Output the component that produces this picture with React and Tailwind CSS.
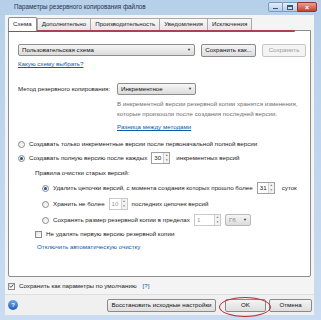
import React from 'react';

const font = { fontFamily: '"Liberation Sans", Arial, sans-serif' };

function Radio({ checked }) {
  return (
    <span className="w-[7px] h-[7px] rounded-full border border-[#8a8a8a] bg-gradient-to-br from-[#e6e6e6] to-white flex items-center justify-center shrink-0">
      {checked && <span className="w-[3px] h-[3px] rounded-full bg-[#1f4f8a]" />}
    </span>
  );
}

function Check({ checked }) {
  return (
    <span className="w-[7px] h-[7px] border border-[#8a8a8a] bg-gradient-to-br from-[#e2e2e2] to-white flex items-center justify-center shrink-0">
      {checked && (
        <svg width="6" height="6" viewBox="0 0 6 6">
          <path d="M0.8 3.1 L2.4 4.7 L5.2 1.2" stroke="#2a4d7a" strokeWidth="1.1" fill="none" />
        </svg>
      )}
    </span>
  );
}

function Spin({ value, disabled, w }) {
  return (
    <span className={`flex h-[12px] border shrink-0 ${disabled ? 'border-[#c8c8c8] text-[#9a9a9a]' : 'border-[#a0a0a0] text-[#222]'} bg-white`}>
      <span className={`${w} pl-[2px] flex items-center`}>{value}</span>
      <span className="w-[6px] flex flex-col border-l border-[#d0d0d0] bg-[#f2f2f2]">
        <span className="flex-1 flex items-center justify-center text-[3px] text-[#777]">▲</span>
        <span className="flex-1 flex items-center justify-center text-[3px] text-[#777]">▼</span>
      </span>
    </span>
  );
}

function Combo({ text, w, disabled }) {
  return (
    <span className={`${w} h-[12px] shrink-0 flex items-center justify-between px-[3px] rounded-[2px] border ${disabled ? 'border-[#b8b8b8] text-[#888]' : 'border-[#8d8d8d] text-[#111]'} bg-gradient-to-b from-[#f6f6f6] to-[#dcdcdc]`}>
      <span>{text}</span>
      <span className="text-[4px] text-[#333]">▼</span>
    </span>
  );
}

function Btn({ children, w, disabled }) {
  return (
    <span className={`${w} h-[13px] shrink-0 flex items-center justify-center rounded-[2px] border ${disabled ? 'border-[#c6c6c6] text-[#9c9c9c] bg-[#f4f4f4]' : 'border-[#8a8a8a] text-[#111] bg-gradient-to-b from-[#f4f4f4] to-[#dedede]'}`}>
      {children}
    </span>
  );
}

export default function App() {
  return (
    <div style={font} className="w-[321px] h-[320px] relative overflow-hidden whitespace-nowrap bg-gradient-to-b from-[#b7d0ea] to-[#c9dcf1] text-[6.2px] leading-none text-[#1b1b1b] flex flex-col">
      {/* title bar */}
      <div className="h-[15px] flex items-center pl-[14px] pr-[4px] shrink-0">
        <span className="text-[6.3px] text-[#1d3350]">Параметры резервного копирования файлов</span>
        <div className="ml-auto flex items-start self-start mt-[2px]">
          <span className="w-[15px] h-[10px] rounded-l-[2px] border border-[#7c98bc] bg-gradient-to-b from-[#e4eef9] to-[#b7cde6] flex items-end justify-center pb-[2px]">
            <span className="w-[5px] h-[1.5px] bg-[#3b5677]" />
          </span>
          <span className="w-[14px] h-[10px] border-y border-[#7c98bc] bg-gradient-to-b from-[#e4eef9] to-[#b7cde6] flex items-center justify-center">
            <span className="w-[6px] h-[5px] border border-[#3b5677] border-t-2" />
          </span>
          <span className="w-[20px] h-[10px] rounded-r-[2px] border border-[#8c3a2e] bg-gradient-to-b from-[#e8a090] to-[#c4412c] flex items-center justify-center text-white text-[7px] font-bold">
            ×
          </span>
        </div>
      </div>

      {/* client area */}
      <div className="flex-1 mx-[5px] mr-[7px] mb-[5px] bg-[#f4f4f4] flex flex-col">
        {/* tabs */}
        <div className="flex items-end h-[14px] pl-[3px] mt-[1px] shrink-0">
          <span className="h-[14px] px-[4px] flex items-center bg-white border border-b-0 border-[#8c8c8c] rounded-t-[2px] relative z-10 -mb-px">Схема</span>
          <span className="h-[12px] px-[4px] flex items-center border border-b-0 border-[#a8a8a8] bg-gradient-to-b from-[#f8f8f8] to-[#e6e6e6]">Дополнительно</span>
          <span className="h-[12px] px-[4px] flex items-center border border-b-0 border-l-0 border-[#a8a8a8] bg-gradient-to-b from-[#f8f8f8] to-[#e6e6e6]">Производительность</span>
          <span className="h-[12px] px-[4px] flex items-center border border-b-0 border-l-0 border-[#a8a8a8] bg-gradient-to-b from-[#f8f8f8] to-[#e6e6e6]">Уведомления</span>
          <span className="h-[12px] px-[4px] flex items-center border border-b-0 border-l-0 border-[#a8a8a8] bg-gradient-to-b from-[#f8f8f8] to-[#e6e6e6]">Исключения</span>
        </div>

        {/* tab panel */}
        <div className="mx-[3px] h-[247px] bg-white border border-[#8c8c8c] rounded-b-[2px] flex flex-col pl-[9px] shrink-0">
          <div className="mt-[12px] h-[14px] flex items-center gap-[6px]">
            <Combo text="Пользовательская схема" w="w-[177px]" />
            <Btn w="w-[55px]">Сохранить как...</Btn>
            <Btn w="w-[44px]" disabled>Сохранить</Btn>
          </div>
          <div className="mt-[1px] h-[12px] flex items-center text-[#0b5cad] underline">Какую схему выбрать?</div>

          <div className="mt-[13px] h-[12px] flex items-center">
            <span className="w-[99px]">Метод резервного копирования:</span>
            <Combo text="Инкрементное" w="w-[79px]" />
          </div>
          <div className="pl-[99px] text-[#707070]">
            <div className="mt-[4px] h-[10px] flex items-center">В инкрементной версии резервной копии хранятся изменения,</div>
            <div className="h-[10px] flex items-center">которые произошли после создания последней версии.</div>
            <div className="mt-[3px] h-[10px] flex items-center text-[#0b5cad] underline">Разница между методами</div>
          </div>

          <div className="mt-[7px] h-[10px] flex items-center gap-[4px] pl-[0px]">
            <Radio />
            <span>Создавать только инкрементные версии после первоначальной полной версии</span>
          </div>
          <div className="mt-[3px] h-[12px] flex items-center gap-[4px] pl-[0px]">
            <Radio checked />
            <span>Создавать полную версию после каждых</span>
            <Spin value="30" w="w-[11px]" />
            <span className="ml-[2px]">инкрементных версий</span>
          </div>
          <div className="mt-[4px] h-[10px] flex items-center pl-[17px]">Правила очистки старых версий:</div>
          <div className="mt-[4px] h-[12px] flex items-center gap-[4px] pl-[24px]">
            <Radio checked />
            <span>Удалить цепочки версий, с момента создания которых прошло более</span>
            <Spin value="31" w="w-[10px]" />
            <span className="ml-[3px]">суток</span>
          </div>
          <div className="mt-[4px] h-[12px] flex items-center gap-[4px] pl-[24px]">
            <Radio />
            <span>Хранить не более</span>
            <Spin value="10" w="w-[11px]" disabled />
            <span>последних цепочек версий</span>
          </div>
          <div className="mt-[4px] h-[12px] flex items-center gap-[4px] pl-[24px]">
            <Radio />
            <span>Сохранять размер резервной копии в пределах</span>
            <Spin value="1" w="w-[19px]" disabled />
            <Combo text="Гб" w="w-[26px]" disabled />
          </div>
          <div className="mt-[3px] h-[10px] flex items-center gap-[4px] pl-[17px]">
            <Check />
            <span>Не удалять первую версию резервной копии</span>
          </div>
          <div className="mt-[3px] h-[10px] flex items-center pl-[19px] text-[#0b5cad]">Отключить автоматическую очистку</div>
        </div>

        <div className="mt-[4px] h-[10px] flex items-center gap-[4px] pl-[3px]">
          <Check checked />
          <span>Сохранить как параметры по умолчанию</span>
          <span className="ml-[2px] text-[#0b5cad]">[?]</span>
        </div>

        {/* bottom bar */}
        <div className="mt-auto h-[21px] border-t border-[#dfdfdf] bg-[#f0f0f0] flex items-center pl-[3px] pr-[2px] relative">
          <span className="w-[10px] h-[10px] rounded-full bg-gradient-to-b from-[#6fa8e8] to-[#1d5fb8] flex items-center justify-center text-white text-[6px] font-bold">?</span>
          <span className="ml-auto"><Btn w="w-[109px]">Восстановить исходные настройки</Btn></span>
          <span className="ml-[9px]"><Btn w="w-[41px]">OK</Btn></span>
          <span className="ml-[3px]"><Btn w="w-[43px]">Отмена</Btn></span>
          <span className="absolute left-[214px] top-[2px] w-[52px] h-[20px] rounded-[50%] border-[1.5px] border-[#b5303a]" />
        </div>
      </div>

      {/* red annotation line under tabs */}
      <span className="absolute left-[8px] top-[30px] w-[287px] h-[2px] rounded-full bg-[#b04050]" />
    </div>
  );
}
